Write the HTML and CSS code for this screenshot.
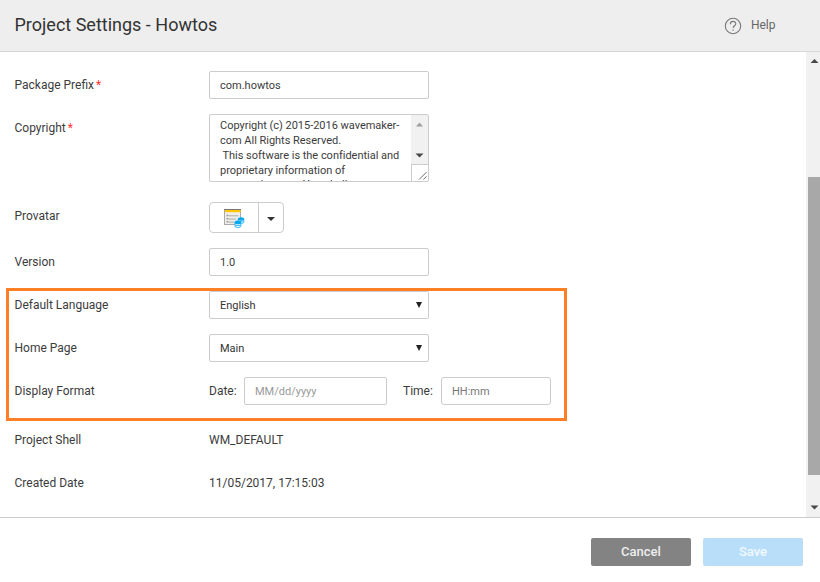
FILE: index.html
```html
<!DOCTYPE html>
<html lang="en">
<head>
<meta charset="utf-8">
<title>Project Settings - Howtos</title>
<link rel="stylesheet" href="styles.css">
</head>
<body>
<div class="dialog">
  <header class="header">
    <h1 class="title">Project Settings - Howtos</h1>
    <div class="help">
      <svg class="help-icon" width="18" height="18" viewBox="0 0 18 18" fill="none" stroke="#777"><circle cx="9" cy="9" r="7.7" stroke-width="1.1"/><path d="M6.3 7.2C6.3 3.4 11.8 3.6 11.8 6.8C11.8 8.8 9.1 8.7 9.1 11" stroke-width="1.1"/><path d="M9.1 12.4V13.8" stroke-width="1.2"/></svg>
      <span>Help</span>
    </div>
  </header>
  <main class="body">
    <form class="form">
      <div class="row"><div class="label">Package Prefix<span class="required">*</span></div><div class="field">com.howtos</div></div>
      <div class="row tall">
        <div class="label">Copyright<span class="required">*</span></div>
        <div class="field area">
          <div class="area-text">Copyright (c) 2015-2016 wavemaker-
com All Rights Reserved.
 This software is the confidential and
proprietary information of
<span class="area-last">wavemaker-com You shall</span></div>
          <div class="area-side">
            <div class="area-bar">
              <svg width="17" height="49" viewBox="0 0 17 49"><path d="M5 11.5L8.5 7.5L12 11.5Z" fill="#a0a0a0"/><path d="M4.5 38.5H12.5L8.5 42.5Z" fill="#484848"/></svg>
            </div>
            <svg class="grip" width="17" height="17" viewBox="0 0 17 17"><path d="M7.5 15.5L15.5 7.5M12 15.5L15.5 12" stroke="#666"/></svg>
          </div>
        </div>
      </div>
      <div class="row provatar">
        <div class="label">Provatar</div>
        <div class="split">
          <div class="split-main">
            <svg width="22" height="21" viewBox="0 0 22 21">
              <rect x="1.5" y="1.5" width="16" height="15" fill="#f0eee9" stroke="#aaa"/>
              <path d="M1 1.5H18" stroke="#777"/><rect x="2" y="2" width="15.5" height="2.2" fill="#ffc600"/>
              <path d="M3.5 7.5h2M3.5 10.8h2M3.5 13.8h2" stroke="#999" stroke-width="1.6"/>
              <path d="M6 7.8h9.5M6 11.1h7M6 14.1h5" stroke="#aeaba6"/>
              <path d="M15.2 11V14.5Q18 17.5 20.8 14.5V11Z" fill="#dff5ff" stroke="#2bb3ef" stroke-width=".9"/><path d="M15 13.5h6" stroke="#58c5f4" stroke-width=".8"/><ellipse cx="18" cy="11" rx="3.2" ry="1.7" fill="#08a8ee"/>
              <path d="M12 14.5V18.5Q14.9 21.2 17.8 18.5V14.5Z" fill="#dff5ff" stroke="#2bb3ef" stroke-width=".9"/><path d="M12 17.5h6" stroke="#58c5f4"/><ellipse cx="14.9" cy="14.4" rx="3.4" ry="1.8" fill="#08a8ee"/>
            </svg>
          </div>
          <div class="split-toggle"><span class="caret"></span></div>
        </div>
      </div>
      <div class="row"><div class="label">Version</div><div class="field">1.0</div></div>
      <div class="row"><div class="label">Default Language</div><div class="field select">English<svg class="arrow" width="6" height="6" viewBox="0 0 6 6"><path d="M0 0H6L3 6Z"/></svg></div></div>
      <div class="row"><div class="label">Home Page</div><div class="field select">Main<svg class="arrow" width="6" height="6" viewBox="0 0 6 6"><path d="M0 0H6L3 6Z"/></svg></div></div>
      <div class="row format">
        <div class="label">Display Format</div>
        <span class="date-label">Date:</span><div class="field date">MM/dd/yyyy</div>
        <span class="time-label">Time:</span><div class="field time">HH:mm</div>
      </div>
      <div class="row"><div class="label">Project Shell</div><div class="value">WM_DEFAULT</div></div>
      <div class="row"><div class="label">Created Date</div><div class="value">11/05/2017, 17:15:03</div></div>
    </form>
    <div class="scrollbar">
      <svg width="14" height="20" viewBox="0 0 14 20"><path d="M4.5 11L8.5 7L12.5 11Z" fill="#484848"/></svg>
      <div class="thumb"></div>
      <svg width="14" height="20" viewBox="0 0 14 20"><path d="M4.5 8.5H12.5L8.5 12.5Z" fill="#484848"/></svg>
    </div>
  </main>
  <footer class="footer"><div class="button cancel">Cancel</div><div class="button save">Save</div></footer>
  <div class="highlight"></div>
</div>
</body>
</html>
```
FILE: styles.css
```css
* { box-sizing: border-box; }
body { margin: 0; background: #fff; color: #3c3c3c; font: 12px/16px Roboto, sans-serif; }
svg { display: block; }
.dialog { position: relative; width: 820px; height: 582px; display: flex; flex-direction: column; overflow: hidden; }
.header { height: 52px; flex: none; display: flex; justify-content: space-between; padding: 0 44.5px 0 14.5px; background: #eee; border-bottom: 1px solid #d7d7d7; }
.title { margin: 13px 0 0; font-size: 18px; line-height: 24px; font-weight: 400; letter-spacing: 0; color: #333; }
.help { display: flex; gap: 9px; padding-top: 17px; color: #666; }
.body { height: 465px; flex: none; display: flex; justify-content: space-between; }
.form { width: 600px; padding: 19px 0 0 14.5px; }
.row { display: flex; align-items: center; height: 28px; margin-bottom: 15px; }
.label { width: 194.5px; flex: none; letter-spacing: 0; }
.required { color: #f33; margin-left: 2px; }
.field { width: 220px; height: 28px; border: 1px solid #ccc; border-radius: 2px; padding: 1px 10px 0; font-size: 11px; line-height: 26px; letter-spacing: 0; background: #fff; }
.tall { height: 68px; align-items: flex-start; margin-bottom: 20px; }
.tall .label { padding-top: 6px; }
.area { height: 68px; display: flex; justify-content: space-between; padding: 0 0 0 10px; overflow: hidden; }
.area-text { flex: none; width: 191px; padding-top: 3px; line-height: 15px; white-space: pre; letter-spacing: -0.02px; }
.area-last { position: relative; top: -1px; }
.area-side { width: 17px; flex: none; }
.area-bar { height: 49px; background: #f1f1f1; }
.grip { border-top: 1px solid #ccc; border-left: 1px solid #ccc; }
.provatar { height: 31px; }
.provatar .label { padding-bottom: 4px; }
.split { display: flex; width: 75px; height: 31px; border: 1px solid #ccc; border-radius: 4px; }
.split-main { width: 49px; padding: 5px 0 0 13px; border-right: 1px solid #ccc; }
.split-toggle { flex: 1; display: flex; justify-content: center; padding-top: 14px; }
.caret { width: 8px; height: 4px; border: 4px solid transparent; border-top-color: #333; border-bottom: 0; }
.select { display: flex; justify-content: space-between; padding-right: 6px; color: #333; }
.arrow { margin-top: 9px; fill: #222; }
.format { margin-bottom: 21px; }
.date { width: 143px; color: #999; }
.time { width: 110px; color: #777; border-radius: 3px; }
.date-label { width: 35px; }
.time-label { width: 38px; margin-left: 16px; }
.scrollbar { width: 14px; height: 465px; display: flex; flex-direction: column; background: #f1f1f1; }
.thumb { width: 12px; height: 298px; margin: 105px 0 22px 2px; background: #a8a8a8; }
.footer { height: 65px; flex: none; display: flex; justify-content: flex-end; gap: 12px; padding: 20px 17px 0 0; border-top: 1px solid #ccc; }
.button { width: 100px; height: 28px; border-radius: 2px; text-align: center; font-size: 13px; line-height: 27px; font-weight: 500; }
.cancel { background: #838383; color: #eee; }
.save { background: #b9defa; color: #f2f9ff; }
.highlight { position: absolute; left: 6px; top: 288px; width: 561px; height: 133px; border: 3px solid #ff7f27; }
```
